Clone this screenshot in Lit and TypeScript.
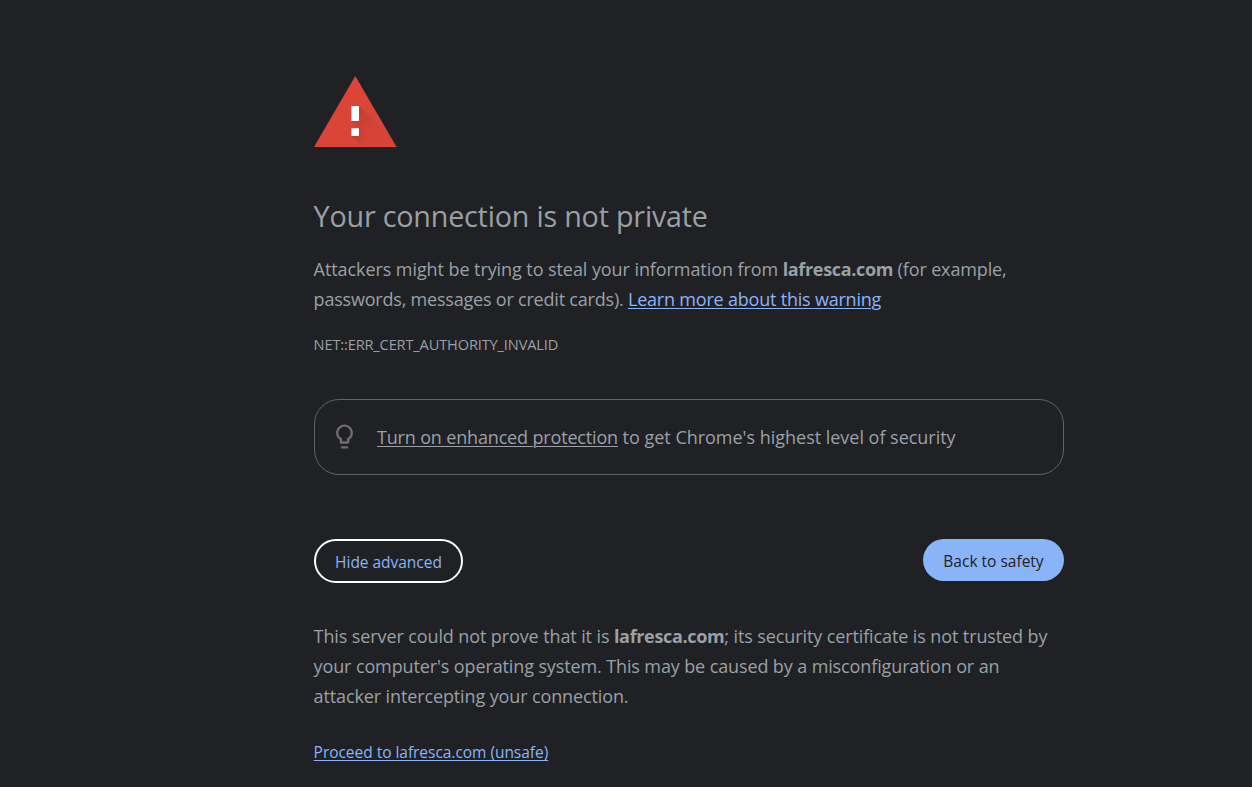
import { LitElement, html, css } from "lit";
import { customElement } from "lit/decorators.js";

@customElement("app-root")
export class AppRoot extends LitElement {
  static styles = css`
    :host { display: block; height: 787px; overflow: hidden; background: #202124; color: #9aa0a6; font-family: "Open Sans", "Noto Sans", sans-serif; }
    main { width: 750.4px; margin-left: 313.6px; padding-top: 76px; box-sizing: border-box; }
    .warning { display: block; width: 83px; height: 72px; margin-left: 0.4px; }
    h1 { margin: 48px 0 0; font-size: 28.7px; line-height: 40px; font-weight: 400; white-space: nowrap; letter-spacing: -0.19px; }
    p { margin: 0; font-size: 18px; line-height: 30px; white-space: nowrap; letter-spacing: -0.108px; }
    .intro { margin-top: 18px; }
    .line { display: block; }
    b { font-weight: 700; letter-spacing: -0.34px; }
    a { color: #8ab4f8; text-decoration: underline; text-decoration-thickness: 1px; text-underline-offset: 2px; }
    .lead { letter-spacing: -0.077px; }
    .example { letter-spacing: -0.135px; }
    .cards { letter-spacing: -0.205px; }
    .code { margin-top: 15px; font-size: 14.6px; letter-spacing: -0.145px; }
    .tip { margin-top: 40px; margin-left: 0.4px; height: 76px; box-sizing: border-box; border: 1px solid #5f6368; border-radius: 25px; display: flex; align-items: center; padding-left: 15px; gap: 18px; }
    .tip svg { width: 29px; height: 29px; margin-bottom: 2px; fill: #6e6e6e; flex: none; }
    .tip p { letter-spacing: -0.02px; }
    .tip a { color: inherit; letter-spacing: -0.163px; }
    .buttons { margin: 64px 0 0 0.4px; display: flex; justify-content: space-between; align-items: flex-start; }
    button { font: inherit; font-size: 15.5px; border: 0; height: 42px; width: 141px; padding: 2px 0 0; border-radius: 22px; background: #8ab4f8; color: #202124; white-space: nowrap; }
    .outlined { width: 149px; height: 44px; border: 2px solid #fff; background: none; color: #8ab4f8; letter-spacing: -0.03px; }
    .details { margin-top: 38px; }
    .os { letter-spacing: -0.12px; }
    .attacker { letter-spacing: -0.121px; }
    .proceed { margin-top: 26px; font-size: 15.5px; letter-spacing: -0.034px; }
  `;

  render() {
    return html`<main>
      <svg class="warning" viewBox="0 0 83 72"><defs><linearGradient id="s" gradientUnits="userSpaceOnUse" x1="41" y1="34" x2="60" y2="53"><stop stop-color="#3e2723" stop-opacity=".2"/><stop offset="1" stop-color="#3e2723" stop-opacity=".02"/></linearGradient><linearGradient id="d" gradientUnits="userSpaceOnUse" x1="41" y1="54" x2="53" y2="66"><stop stop-color="#3e2723" stop-opacity=".2"/><stop offset="1" stop-color="#3e2723" stop-opacity=".02"/></linearGradient></defs><path fill="#db4437" d="M41.300 0 82.600 71H0z"/><path fill="url(#s)" d="M45 30 76 60 82.600 71H63L37.400 45z"/><path fill="url(#d)" d="M45 52.200 63 71H48.400L37.400 60z"/><path fill="#fff" d="M37.400 30h7.600v15h-7.600zM37.400 52.200h7.600V60h-7.600z"/></svg>
      <h1>Your connection is not private</h1>
      <p class="intro"><span class="line"><span class="lead">Attackers might be trying to steal your information from </span><b>lafresca.com</b><span class="example"> (for example,</span></span><span class="line cards">passwords, messages or credit cards). <a>Learn more about this warning</a></span></p>
      <p class="code">NET::ERR_CERT_AUTHORITY_INVALID</p>
      <section class="tip"><svg viewBox="0 0 24 24"><path d="M9 21c0 .55.45 1 1 1h4c.55 0 1-.45 1-1v-1H9v1zm3-19C8.140 2 5 5.140 5 9c0 2.380 1.190 4.470 3 5.740V17c0 .55.45 1 1 1h6c.55 0 1-.45 1-1v-2.260c1.810-1.270 3-3.360 3-5.740 0-3.860-3.140-7-7-7zm2.850 11.100-.85.6V16h-4v-2.300l-.85-.6C7.800 12.160 7 10.630 7 9c0-2.760 2.240-5 5-5s5 2.240 5 5c0 1.630-.8 3.160-2.150 4.100z"/></svg><p><a>Turn on enhanced protection</a> to get Chrome's highest level of security</p></section>
      <div class="buttons"><button class="outlined">Hide advanced</button><button>Back to safety</button></div>
      <p class="details"><span class="line">This server could not prove that it is <b>lafresca.com</b>; its security certificate is not trusted by</span><span class="line os">your computer's operating system. This may be caused by a misconfiguration or an</span><span class="line attacker">attacker intercepting your connection.</span></p>
      <p class="proceed"><a>Proceed to lafresca.com (unsafe)</a></p>
    </main>`;
  }
}
